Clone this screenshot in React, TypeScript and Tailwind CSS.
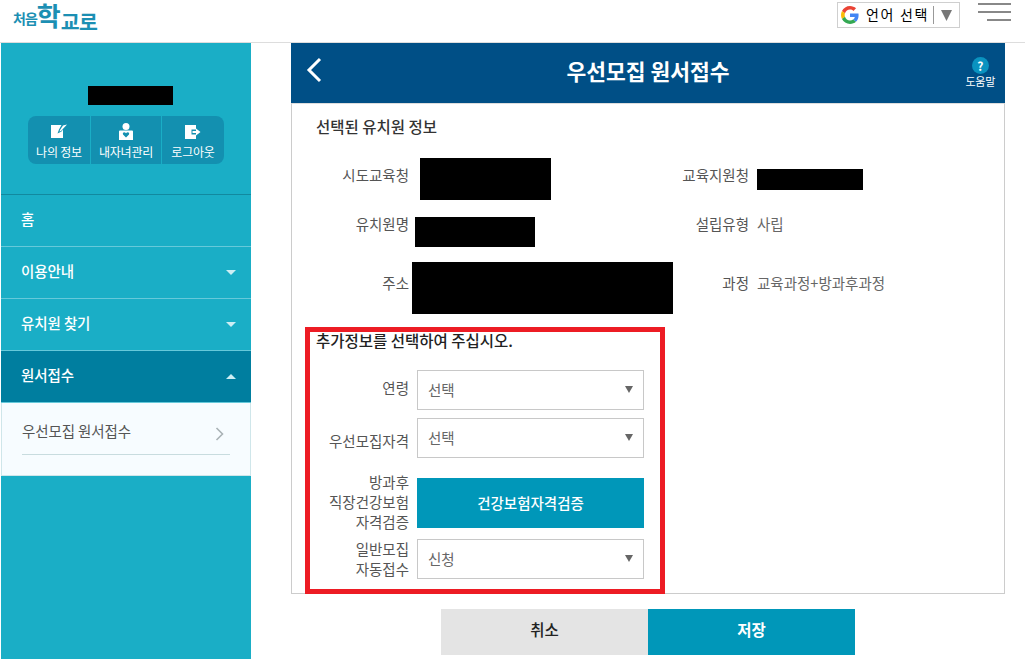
const font = "font-['Noto_Sans_CJK_KR','Noto_Sans',sans-serif]"

function Caret({ up }: { up?: boolean }) {
  return (
    <svg width="10" height="5" viewBox="0 0 10 5" className="fill-[#cdeef4]">
      <path d={up ? 'M5 0l5 5H0z' : 'M5 5L0 0h10z'} />
    </svg>
  )
}

function GoogleG() {
  return (
    <svg width="18" height="18" viewBox="0 0 48 48">
      <path fill="#EA4335" d="M24 9.500c3.500 0 6.700 1.200 9.200 3.600l6.900-6.900C35.900 2.400 30.500 0 24 0 14.600 0 6.500 5.400 2.600 13.200l8 6.200C12.500 13.600 17.800 9.500 24 9.500z" />
      <path fill="#4285F4" d="M46.900 24.500c0-1.600-.2-3.100-.4-4.500H24v9h12.900c-.6 3-2.200 5.500-4.700 7.200l7.700 6c4.500-4.200 7-10.300 7-17.700z" />
      <path fill="#FBBC05" d="M10.600 28.600c-.5-1.500-.8-3-.8-4.600s.3-3.100.8-4.600l-8-6.200C.9 16.500 0 20.100 0 24s.9 7.500 2.600 10.800l8-6.200z" />
      <path fill="#34A853" d="M24 48c6.500 0 11.900-2.100 15.900-5.800l-7.700-6c-2.200 1.500-4.900 2.300-8.200 2.300-6.200 0-11.500-4.100-13.400-9.900l-8 6.200C6.500 42.600 14.600 48 24 48z" />
    </svg>
  )
}

function QuickButton({ label, icon, className }: { label: string; icon: React.ReactNode; className: string }) {
  return (
    <div className={`flex h-12 flex-col items-center justify-start pt-[7px] ${className}`}>
      <div className="flex h-[17px] items-center">{icon}</div>
      <span className="mt-[3px] text-[12px] leading-[18px] tracking-[-0.2px] whitespace-nowrap text-white">{label}</span>
    </div>
  )
}

function MenuItem({ label, caret, active }: { label: string; caret?: 'up' | 'down'; active?: boolean }) {
  return (
    <div className={`flex h-[52px] items-center justify-between border-b border-[#66c9da] pr-[15px] pl-[20px] ${active ? 'bg-[#007e9f]' : ''}`}>
      <span className="pb-[3px] text-[14.500px] font-medium tracking-[-0.1px] text-white">{label}</span>
      {caret && <Caret up={caret === 'up'} />}
    </div>
  )
}

function Sidebar() {
  return (
    <aside className="ml-px h-[616px] w-[250px] shrink-0 bg-[#1aaec6]">
      <div className="h-[152px] border-b border-[#12899f] pt-[43px]">
        <div className="ml-[87px] h-[19px] w-[85px] bg-black" />
        <div className="mt-[11px] ml-[27px] flex w-[196px] rounded-lg bg-[#1390b0]">
          <QuickButton
            className="w-[63px] border-r border-[#1aaec6]"
            label="나의 정보"
            icon={
              <svg width="17" height="15" viewBox="0 0 17 15" fill="white">
                <path d="M0 1h10.500L8 5.500 6.500 9.500l4-2L12 5.500V14H0z" />
                <path d="M12 1.500l4-1-6 6.500-1.500.500.500-1.500z" />
              </svg>
            }
          />
          <QuickButton
            className="w-[71px] border-r border-[#1aaec6]"
            label="내자녀관리"
            icon={
              <svg width="14" height="17" viewBox="0 0 14 17" fill="white">
                <circle cx="7" cy="3.500" r="3.500" />
                <path fillRule="evenodd" d="M0 8.500q0-1 1-1h12q1 0 1 1V17H0zM7 14.500l3-3q.8-2-1-2.200-1.300 0-2 1-.7-1-2-1-1.800.2-1 2.200z" />
              </svg>
            }
          />
          <QuickButton
            className="w-[62px]"
            label="로그아웃"
            icon={
              <svg width="16" height="14" viewBox="0 0 16 14" fill="white">
                <path d="M0 0h11v4.500H6.500v5H11V14H0z" />
                <path d="M7.500 6h3.500V3.500L15.500 7 11 10.500V8H7.500z" />
              </svg>
            }
          />
        </div>
      </div>
      <MenuItem label="홈" />
      <MenuItem label="이용안내" caret="down" />
      <MenuItem label="유치원 찾기" caret="down" />
      <MenuItem label="원서접수" caret="up" active />
      <div className="h-[73px] border-x border-b border-[#cfe6ea] bg-[#f7fcff] px-[20px] pt-[18px]">
        <div className="flex h-[34px] items-start justify-between border-b border-[#c8dcdf] pr-[5px]">
          <span className="text-[14.500px] leading-5 tracking-[-0.1px] text-[#555]">우선모집 원서접수</span>
          <svg width="10" height="14" viewBox="0 0 10 14" fill="none" stroke="#a9b2b6" strokeWidth="1.600" className="mt-[6px]">
            <path d="M1.500 1l6 6-6 6" />
          </svg>
        </div>
      </div>
    </aside>
  )
}

function InfoRow({ h, lift, label, value, label2, value2 }: { h: string; lift: string; label: string; value: React.ReactNode; label2: string; value2: React.ReactNode }) {
  return (
    <div className={`flex items-center ${h}`}>
      <div className={`w-[117px] text-right text-[14.500px] text-[#555] ${lift}`}>{label}</div>
      <div className="w-[266px] pl-px">{value}</div>
      <div className={`w-[74px] text-right text-[14.500px] text-[#555] ${lift}`}>{label2}</div>
      <div className={`pl-[8px] text-[14.500px] text-[#666] ${typeof value2 === 'string' ? lift : ''}`}>{value2}</div>
    </div>
  )
}

function FormRow({ label, className, labelClass, children }: { label: React.ReactNode; className: string; labelClass?: string; children: React.ReactNode }) {
  return (
    <div className={`flex items-center ${className}`}>
      <div className={`w-[93px] text-right text-[14.500px] leading-[20px] whitespace-nowrap text-[#555] ${labelClass ?? ''}`}>{label}</div>
      <div className="ml-[8px] w-[227px]">{children}</div>
    </div>
  )
}

function SelectBox({ value }: { value: string }) {
  return (
    <div className="flex h-10 items-center justify-between border border-[#c8c8c8] bg-white pr-[10px] pl-[10px] text-[14.500px] text-[#666]">
      <span>{value}</span>
      <svg width="8" height="7" viewBox="0 0 8 7" fill="#666" className="mb-[2px]">
        <path d="M0 0h8L4 7z" />
      </svg>
    </div>
  )
}

export default function App() {
  return (
    <div className={`h-[659px] w-[1034px] overflow-hidden bg-white ${font}`}>
      <header className="flex h-[43px] w-[1025px] items-start justify-between border-b border-[#dddddd]">
        <div className="ml-[13px] flex h-[36px] items-end font-bold whitespace-nowrap text-[#1c8fb3]">
          <span className="pb-[11px] text-[14px] leading-none tracking-[-1px]">처음</span>
          <span className="pb-[8px] text-[26px] leading-none">학</span>
          <span className="pb-[5px] text-[20.500px] leading-none tracking-[-0.500px]">교로</span>
        </div>
        <div className="flex items-start">
          <div className="mt-[2px] flex h-[26px] w-[123px] items-center border border-[#cfcfcf] pl-[3px] text-[14px] text-black">
            <GoogleG />
            <span className="mb-[2px] ml-[7px] tracking-[1.700px] whitespace-nowrap">언어 선택</span>
            <span className="ml-[4px] h-[18px] w-px bg-[#999]" />
            <svg width="11" height="11" viewBox="0 0 11 11" fill="#777" className="ml-[7px]">
              <path d="M0 0h11L5.500 11z" />
            </svg>
          </div>
          <div className="mt-[3px] mr-[14px] ml-[18px] flex w-[33px] flex-col items-end gap-[6px]">
            <span className="h-[2px] w-full bg-[#888]" />
            <span className="h-[2px] w-full bg-[#888]" />
            <span className="h-[2px] w-[24px] bg-[#888]" />
          </div>
        </div>
      </header>
      <div className="flex">
        <Sidebar />
        <main className="ml-[40px] w-[714px]">
          <div className="relative flex h-[60px] items-center justify-center bg-[#004f86]">
            <svg width="16" height="26" viewBox="0 0 16 26" fill="none" stroke="white" strokeWidth="3" className="absolute top-[14px] left-[15px]">
              <path d="M14 2L3 13l11 11" />
            </svg>
            <h1 className="pb-[4px] text-[21.500px] font-bold text-white">우선모집 원서접수</h1>
            <div className="absolute top-[14px] right-[10px] flex flex-col items-center">
              <span className="flex size-[17px] items-center justify-center rounded-full bg-[#0a93c0] text-[12px] leading-none font-bold text-white">?</span>
              <span className="text-[11px] leading-[15px] tracking-[-0.3px] text-white">도움말</span>
            </div>
          </div>
          <section className="h-[491px] border border-[#cccccc] border-t-[#dddddd]">
            <h2 className="pt-[12px] pl-[24px] text-[15.500px] leading-[20px] font-medium text-[#333]">선택된 유치원 정보</h2>
            <div className="mt-[22px]">
              <InfoRow
                h="h-[42px]"
                lift="pb-[8px]"
                label="시도교육청"
                value={<div className="ml-[10px] h-[42px] w-[131px] bg-black" />}
                label2="교육지원청"
                value2={<div className="h-[21px] w-[106px] bg-black" />}
              />
              <div className="h-[17px]" />
              <InfoRow
                h="h-[30px]"
                lift="pb-[16px]"
                label="유치원명"
                value={<div className="ml-[5px] h-[30px] w-[120px] bg-black" />}
                label2="설립유형"
                value2="사립"
              />
              <div className="h-[15px]" />
              <InfoRow
                h="h-[52px]"
                lift="pb-[10px]"
                label="주소"
                value={<div className="ml-[2px] h-[52px] w-[261px] bg-black" />}
                label2="과정"
                value2="교육과정+방과후과정"
              />
            </div>
            <div className="mt-[13px] ml-[13px] h-[267px] w-[360px] border-[5px] border-[#ed1c24] bg-white pl-[6px]">
              <p className="mt-[-2px] text-[15.500px] leading-[20px] font-medium whitespace-nowrap text-[#222]">추가정보를 선택하여 주십시오.</p>
              <FormRow label="연령" className="mt-[20px]" labelClass="pb-[4px]">
                <SelectBox value="선택" />
              </FormRow>
              <FormRow label="우선모집자격" className="mt-[8px]" labelClass="pt-[6px]">
                <SelectBox value="선택" />
              </FormRow>
              <FormRow
                className="mt-[14px]"
                labelClass="pb-[2px]"
                label={
                  <>
                    방과후
                    <br />
                    직장건강보험
                    <br />
                    자격검증
                  </>
                }
              >
                <button className="h-[50px] w-full bg-[#0097b9] text-[14.500px] font-medium text-white">건강보험자격검증</button>
              </FormRow>
              <FormRow
                className="mt-[5px]"
                label={
                  <>
                    일반모집
                    <br />
                    자동접수
                  </>
                }
              >
                <SelectBox value="신청" />
              </FormRow>
            </div>
          </section>
          <div className="mt-[15px] flex justify-center">
            <button className="h-[46px] w-[207px] bg-[#e4e4e4] pb-[4px] text-[15.500px] font-medium text-[#222]">취소</button>
            <button className="h-[46px] w-[207px] bg-[#0097b9] pb-[4px] text-[15.500px] font-bold text-white">저장</button>
          </div>
        </main>
      </div>
    </div>
  )
}
